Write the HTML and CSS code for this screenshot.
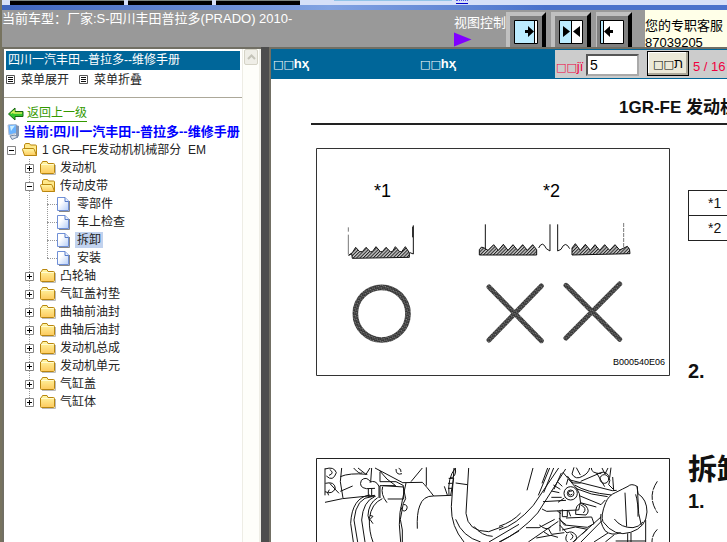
FILE: index.html
```
<!DOCTYPE html>
<html lang="zh-CN">
<head>
<meta charset="utf-8">
<title>维修手册</title>
<link rel="stylesheet" href="styles.css">
</head>
<body>
<svg class="defs" width="0" height="0" aria-hidden="true">
  <defs>
    <linearGradient id="gold" x1="0" y1="0" x2="0" y2="1"><stop offset="0" stop-color="#fff9a8"/><stop offset="1" stop-color="#fdc95c"/></linearGradient>
    <linearGradient id="sheet" x1="0" y1="0" x2="1" y2="1"><stop offset=".35" stop-color="#fff"/><stop offset="1" stop-color="#b4cdf8"/></linearGradient>
    <pattern id="hatch" width="7" height="7" patternUnits="userSpaceOnUse" patternTransform="rotate(45)"><rect width="7" height="7" fill="#ccc"/><path d="M1.500 0V7" stroke="#222" stroke-width="3"/></pattern>
    <pattern id="grain" width="9" height="9" patternUnits="userSpaceOnUse" patternTransform="rotate(25)"><rect width="9" height="9" fill="#303030"/><path d="M1 1h3v3h-3zM5 6h4v2h-4z" fill="#aaa"/></pattern>
    <symbol id="plus" viewBox="0 0 9 9"><path d="M.5 .5h8v8h-8z" fill="#fff" stroke="#848484"/><path d="M2 4.500h5M4.500 2v5" stroke="#000"/></symbol>
    <symbol id="minus" viewBox="0 0 9 9"><path d="M.5 .5h8v8h-8z" fill="#fff" stroke="#848484"/><path d="M2 4.500h5" stroke="#000"/></symbol>
    <symbol id="closed" viewBox="0 0 16 16"><path d="M2 14.500h13.500V5" fill="none" stroke="#bbb"/><path d="M.5 4V12.500q0 1 1 1H13.500q1 0 1-1V4.500q0-1-1-1H8L7 1.500H2.500L1.500 3.500z" fill="url(#gold)" stroke="#b8860f"/><path d="M1 4.500H13.500" stroke="#fffbd0"/></symbol>
    <symbol id="open" viewBox="0 0 16 16"><path d="M2.500 13.500V3L3.500 1.500H7.500L8.500 3H13.500Q14.500 3 14.500 4V13.500z" fill="#ffe98a" stroke="#b8860f"/><path d="M.5 7.500Q.5 6.500 1.500 6.500H11Q12 6.500 12.300 7.500L14.500 13.500H3.500Q2.500 13.500 2.200 12.500z" fill="url(#gold)" stroke="#b8860f"/></symbol>
    <symbol id="page" viewBox="0 0 13 15"><path d="M2 14.500H12.500V4" fill="none" stroke="#888"/><path d="M.5 .5H8L11.500 4V13.500H.5z" fill="url(#sheet)" stroke="#6f8fd6"/><path d="M8 .5V4.500H11.500" fill="#e7f0ff" stroke="#567bc8"/></symbol>
    <symbol id="list" viewBox="0 0 9 9"><path d="M.5 .5h8v8h-8z" fill="#fff" stroke="#555"/><path d="M2 2.500h5M2 4.500h5M2 6.500h5" stroke="#111"/></symbol>
  </defs>
</svg>

<div class="strip" aria-hidden="true"><i class="tab first"></i><i class="tab"></i><i class="tab"></i><i class="strip-line"></i><i class="dots"></i></div>
<header class="header">
  <p class="model">当前车型：厂家:S-四川丰田普拉多(PRADO) 2010-</p>
  <div class="view-label">视图控制
    <svg width="18" height="15" viewBox="0 0 18 15"><path d="M0 .5L17.500 7.500L0 14.500z" fill="#8000ff"/></svg>
  </div>
  <div class="views">
    <button class="view" aria-label="隐藏右侧"><svg width="40" height="36" viewBox="0 0 40 36"><path d="M0 0H40V36H0z" fill="#c0c0c0"/><path d="M4 4H36V36H4z" fill="#808080"/><path d="M36 4L40 0V36H36z" fill="#000"/><path d="M8.500 8.500H31.500V31.500H8.500z" fill="#bcecff" stroke="#000"/><path d="M29 9h2v22H29z" fill="#fff"/><path d="M28.500 9v22" stroke="#000"/><path d="M19 18h3v-4l6 5.500l-6 5.500v-4h-3z"/></svg></button>
    <button class="view" aria-label="并排显示"><svg width="40" height="36" viewBox="0 0 40 36"><path d="M0 0H40V36H0z" fill="#c0c0c0"/><path d="M4 4H36V36H4z" fill="#808080"/><path d="M36 4L40 0V36H36z" fill="#000"/><path d="M8.500 8.500H31.500V31.500H8.500z" fill="#bcecff" stroke="#000"/><path d="M21 9h10v22H21z" fill="#fff"/><path d="M20.500 9v22" stroke="#000"/><path d="M12 14l7 5.500l-7 5.500zM29 14l-7 5.500l7 5.500z"/></svg></button>
    <button class="view" aria-label="隐藏左侧"><svg width="36" height="36" viewBox="0 0 36 36"><path d="M0 0H36V36H0z" fill="#c0c0c0"/><path d="M1 4H32V36H1z" fill="#808080"/><path d="M32 4L36 0V36H32z" fill="#000"/><path d="M4.500 8.500H27.500V31.500H4.500z" fill="#fff" stroke="#000"/><path d="M5 9h2v22H5z" fill="#bcecff"/><path d="M7.500 9v22" stroke="#000"/><path d="M8 19.500l6-5.500v4h3v3h-3v4z"/></svg></button>
  </div>
  <div class="service">您的专职客服<br>87039205</div>
</header>

<main class="frames">
  <nav class="side">
    <div class="side-body">
      <h1 class="manual">四川一汽丰田--普拉多--维修手册</h1>
      <div class="tools">
        <button class="tool"><svg width="9" height="9"><use href="#list"/></svg>菜单展开</button>
        <button class="tool"><svg width="9" height="9"><use href="#list"/></svg>菜单折叠</button>
      </div>
      <a class="back" href="#up"><svg width="16" height="14" viewBox="0 0 16 14"><path d="M.5 7L7 1V4.500H15V9.500H7V13z" fill="#35c52b" stroke="#17650f"/><path d="M3 6.500L6 4V6H14" fill="none" stroke="#d6f05d" stroke-width="1.500"/></svg><span>返回上一级</span></a>
      <div class="current"><svg width="13" height="16" viewBox="0 0 13 16"><path d="M1 1L9 0L10 9L2 11z" fill="#69b2ff" stroke="#b4bfd1"/><path d="M3 2L8 1.500L4 7z" fill="#cdf0ff"/><path d="M9 1L12 2V12L9 14z" fill="#8093b0"/><path d="M3 12L8 11L11 13L5 15.500z" fill="#d5dde9" stroke="#7186a5"/></svg><span>当前:四川一汽丰田--普拉多--维修手册</span></div>
      <ul class="tree root">
        <li><div class="row"><svg class="toggle" width="9" height="9"><use href="#minus"/></svg><svg class="folder" width="16" height="16"><use href="#open"/></svg><a href="#em">1 GR—FE发动机机械部分&nbsp; EM</a></div>
          <ul class="tree">
            <li><div class="row"><svg class="toggle" width="9" height="9"><use href="#plus"/></svg><svg class="folder" width="16" height="16"><use href="#closed"/></svg><a href="#n1">发动机</a></div></li>
            <li><div class="row"><svg class="toggle" width="9" height="9"><use href="#minus"/></svg><svg class="folder" width="16" height="16"><use href="#open"/></svg><a href="#n2">传动皮带</a></div>
              <ul class="tree pages">
                <li class="row"><svg width="13" height="15"><use href="#page"/></svg><a href="#p1">零部件</a></li>
                <li class="row"><svg width="13" height="15"><use href="#page"/></svg><a href="#p2">车上检查</a></li>
                <li class="row"><svg width="13" height="15"><use href="#page"/></svg><a class="selected" href="#p3">拆卸</a></li>
                <li class="row"><svg width="13" height="15"><use href="#page"/></svg><a href="#p4">安装</a></li>
              </ul>
            </li>
            <li><div class="row"><svg class="toggle" width="9" height="9"><use href="#plus"/></svg><svg class="folder" width="16" height="16"><use href="#closed"/></svg><a href="#n3">凸轮轴</a></div></li>
            <li><div class="row"><svg class="toggle" width="9" height="9"><use href="#plus"/></svg><svg class="folder" width="16" height="16"><use href="#closed"/></svg><a href="#n4">气缸盖衬垫</a></div></li>
            <li><div class="row"><svg class="toggle" width="9" height="9"><use href="#plus"/></svg><svg class="folder" width="16" height="16"><use href="#closed"/></svg><a href="#n5">曲轴前油封</a></div></li>
            <li><div class="row"><svg class="toggle" width="9" height="9"><use href="#plus"/></svg><svg class="folder" width="16" height="16"><use href="#closed"/></svg><a href="#n6">曲轴后油封</a></div></li>
            <li><div class="row"><svg class="toggle" width="9" height="9"><use href="#plus"/></svg><svg class="folder" width="16" height="16"><use href="#closed"/></svg><a href="#n7">发动机总成</a></div></li>
            <li><div class="row"><svg class="toggle" width="9" height="9"><use href="#plus"/></svg><svg class="folder" width="16" height="16"><use href="#closed"/></svg><a href="#n8">发动机单元</a></div></li>
            <li><div class="row"><svg class="toggle" width="9" height="9"><use href="#plus"/></svg><svg class="folder" width="16" height="16"><use href="#closed"/></svg><a href="#n9">气缸盖</a></div></li>
            <li><div class="row"><svg class="toggle" width="9" height="9"><use href="#plus"/></svg><svg class="folder" width="16" height="16"><use href="#closed"/></svg><a href="#n10">气缸体</a></div></li>
          </ul>
        </li>
      </ul>
    </div>
    <div class="scroll"><span class="scroll-up"><svg width="9" height="6" viewBox="0 0 9 6"><path d="M1 5L4.500 1.500L8 5" fill="none" stroke="#c4c3b8" stroke-width="2"/></svg></span></div>
  </nav>
  <div class="divider"></div>
  <section class="viewer">
    <div class="bar">
      <a class="step" href="#prev"><span class="box">□□</span>hҳ</a>
      <a class="step" href="#next"><span class="box">□□</span>hҳ</a>
      <form class="jump">
        <label for="pg"><span class="box">□□</span>jї</label>
        <input id="pg" type="text" value="5">
        <button type="button"><span class="box">□□</span>ת</button>
        <output>5 / 16</output>
      </form>
    </div>
    <article class="paper">
      <h2 class="engine">1GR-FE 发动机</h2>
      <div class="columns">
        <div class="figures">
          <svg class="figure" width="354" height="228" viewBox="0 0 354 228">
            <path d="M.5 .5H353.500V227.500H.5z" fill="none" stroke="#333"/>
            <g class="label"><text x="58" y="49">*1</text><text x="227" y="49">*2</text></g>
            <text class="code" x="297" y="217">B000540E06</text>
            <g transform="translate(-17 -8) scale(.33333)" fill="none" stroke="#111" stroke-width="3">
              <path d="M148 262V275M148 284V344" stroke="#777"/><path d="M343 256V342L333 338M341 260V292"/>
              <path d="M149 346L160 338L170 322L182 335H190L201 322L214 335H220L231 320L244 335H250L261 322L274 335H280L289 320L302 335H308L319 320L331 338V352L160 355L158 341z" fill="url(#hatch)"/>
            </g>
            <g transform="translate(143 -8) scale(.33333)" fill="none" stroke="#111" stroke-width="3">
              <path d="M79 253V332M273 253V333L262 326Q250 300 239 324M296 253V333L306 328Q319 300 332 326"/><path d="M494 249V322" stroke="#777" stroke-dasharray="12 3"/>
              <path d="M61 345V329Q67 317 74 323L87 331L104 314L118 331L133 313L147 331L162 314L176 331L191 314L205 331L221 314L233 329V345z" fill="url(#hatch)"/>
              <path d="M339 345V324L349 311L364 331L379 313L394 331L408 314L422 331L437 314L452 331L468 314L482 330L505 319Q514 325 513 341z" fill="url(#hatch)"/>
            </g>
            <g transform="translate(-17 112) scale(.33333)" fill="none" stroke="url(#grain)" stroke-width="17" stroke-linecap="round">
              <circle cx="248" cy="161" r="79"/><path stroke-width="15" d="M570 81L727 242M727 78L570 240M801 76L962 238M962 72L801 234"/>
            </g>
          </svg>
          <svg class="figure" width="354" height="228" viewBox="0 0 354 228">
            <path d="M.5 .5H353.500V227.500H.5z" fill="none" stroke="#222"/>
            <g transform="translate(-17 -18) scale(.33333)" fill="none" stroke="#111" stroke-width="3">
              <path d="M78 85V166M78 187L130 176L228 166M128 84L124 125L132 174M124 110Q150 98 205 103M78 87Q105 78 112 98Q102 127 82 108M92 88Q108 100 90 106M79 130Q107 123 109 145Q100 165 78 155M92 130L120 160M91 149Q82 160 89 166M124 154L161 138M164 84Q182 105 190 98M177 84L201 103L213 84"/>
              <path d="M218 84L215 126Q202 107 187 121Q178 142 202 146L228 145M228 84L311 128M212 127Q230 118 240 139M243 96V125H291L314 137M240 90Q263 121 290 137H243V174M291 87Q291 107 309 101M299 85Q307 86 306 96M370 84L336 125M382 82V137M310 128L370 127Q382 139 404 168L458 166M404 168Q372 167 362 198Q353 220 355 266"/>
              <path d="M208 146V169H230M218 146V167M240 138V174M251 140Q244 163 264 188M252 137L314 141V177H266M321 129L311 176Q300 220 301 254L305 306M312 137L320 176L313 190L304 238L310 270V306M313 193Q330 195 322 210Q311 219 306 202"/>
              <path d="M213 165Q159 172 155 250L163 306M219 170Q172 171 165 240L176 306M227 170Q192 184 188 240L198 306M236 173Q208 190 207 227L212 243M250 176Q217 190 211 236Q210 276 222 306M213 226L222 229L213 238L222 251"/>
              <path d="M469 84Q445 114 450 165M469 84Q474 111 451 116M449 115H464L455 166M436 139L445 165M447 130H461M447 145H460M465 84L457 200Q456 260 495 306M509 84L501 220Q506 275 569 275L613 259M470 129L505 134M470 238Q490 290 545 306M525 259Q548 288 581 289M570 306L660 253M603 306L660 273"/>
            </g>
            <g transform="translate(183 -18) scale(.33333)" fill="none" stroke="#111" stroke-width="3">
              <path d="M102 84L84 151M152 84L118 166M146 84L129 130M164 84L134 158M179 84L103 196Q52 255 0 270M200 87L116 219Q65 277 0 306M187 99L165 148M0 259Q40 246 65 219M205 108L222 129H245M191 96L233 146M225 82L219 102Q230 121 250 109Q268 101 272 84M232 83L244 105M277 84Q276 100 307 101"/>
              <path d="M209 119L340 152L353 151M245 124L294 103Q317 88 329 107Q336 123 329 134L342 147M293 99L317 140M309 84L318 102M327 84L318 102M336 83L332 113M232 146Q276 166 326 170M227 135Q260 157 337 165M341 111L344 151"/>
              <circle cx="316" cy="117" r="13"/><circle cx="215" cy="160" r="20"/><circle cx="215" cy="160" r="10"/><path d="M218 154Q207 151 209 163Q215 168 220 162M175 125L190 139M163 135L184 148M157 153L181 158M157 172H188M177 187L196 174M202 134L207 117M232 143L241 161Q249 188 239 210L143 214L129 207M132 185L201 181M241 167L306 194L319 180M244 188L292 201"/>
              <path d="M183 210V274M190 208V230H205V211M175 213L186 221M209 213L215 229M230 223Q228 194 247 190L261 198Q274 214 261 225L230 223M246 195Q266 205 253 219M201 234L278 231L285 251L265 262L196 255L180 234M184 241L201 254M306 231L225 303M309 242L246 306M121 255Q144 274 155 261M81 263H120L167 238M88 306L178 244M112 294L156 286L177 292M149 267L158 283L196 278M182 255L204 279M189 270L229 261L265 268L250 282M135 276L152 287"/>
              <path d="M204 279Q219 270 231 286Q237 301 221 306M204 283Q196 299 206 306M215 281Q229 288 214 300M349 158Q373 146 387 139Q397 129 414 139L417 161Q444 178 444 216Q442 262 395 277Q347 293 312 245Q304 228 320 188Q329 166 349 158M415 139L419 220L427 256M378 158L383 260M410 163Q418 188 417 230M306 222Q301 246 318 272Q337 289 365 278M346 237Q366 264 402 263Q418 262 432 246M440 240V306M386 280V306M396 278V306M350 303H440M327 279L285 306M346 284L319 306"/>
              <path d="M475 124Q443 171 476 219M475 268Q459 283 459 306" stroke-dasharray="28 3"/>
            </g>
          </svg>
        </div>
        <div class="notes">
          <table class="key"><tr><td>*1</td></tr><tr><td>*2</td></tr></table>
          <p class="num second">2.</p>
          <h3>拆卸</h3>
          <p class="num">1.</p>
        </div>
      </div>
    </article>
  </section>
</main>
</body>
</html>
```
FILE: styles.css
```
* { box-sizing: border-box; }
body {
  margin: 0;
  height: 100vh;
  display: flex;
  flex-direction: column;
  overflow: hidden;
  background: #999;
  border-left: 2px solid #77735f;
  font: 12px/18px "Liberation Sans", "Noto Sans CJK SC", sans-serif;
  color: #222;
}
.defs { position: absolute; }
svg { display: block; flex: none; }
h1, h2, h3, p, ul { margin: 0; padding: 0; }
button { font: inherit; color: inherit; padding: 0; border: 0; background: none; }
a { color: inherit; text-decoration: none; }

.strip {
  display: flex;
  flex: none;
  gap: 4px;
  height: 10px;
  padding-left: 8px;
  background: linear-gradient(#d6e0f8 0 5px, transparent 5px), linear-gradient(90deg, #3e65bd, #82a3e2 45%, #4a72cb 75%);
}
.tab { width: 84px; height: 5px; background: #000; border-top: 1px solid #7c8580; }
.tab.first { width: 114px; }
.strip-line { width: 118px; height: 1px; margin-left: 30px; background: #91c4e8; }
.dots { width: 12px; height: 4px; border: solid #00c; border-width: 1px 0; border-top: 1px dotted #55e; }

.header { display: flex; flex: none; height: 37px; overflow: hidden; color: #fff; }
.model { flex: 1; font-size: 13px; line-height: 18px; white-space: nowrap; }
.view-label { width: 52px; padding-top: 4px; font-size: 13px; white-space: nowrap; }
.views { display: flex; gap: 5px; padding-top: 2px; }
.service {
  width: 82px;
  margin-left: 13px;
  padding-top: 7px;
  background: #ffffe8;
  color: #000;
  font-size: 13px;
  line-height: 17px;
  white-space: nowrap;
}

.frames { display: flex; flex: 1; min-height: 0; }
.side, .viewer { border: solid #716f64; border-width: 2px 0 0 2px; background: #fff; }
.side { display: flex; flex: none; width: 259px; }
.side-body { flex: 1; min-width: 0; overflow: hidden; }
.manual {
  margin: 2px 2px 0;
  padding-left: 2px;
  background: #069;
  color: #fff;
  font-size: 12px;
  font-weight: 400;
  line-height: 19px;
}
.tools {
  display: flex;
  gap: 10px;
  height: 28px;
  padding: 0 2px 8px;
  border-bottom: 1px solid #aca899;
}
.tool { display: flex; align-items: center; gap: 6px; }
.back { display: flex; align-items: center; gap: 3px; margin: 8px 0 0 4px; color: #390; }
.back span { line-height: 15px; border-bottom: 1px solid #390; }
.current {
  display: flex;
  align-items: center;
  gap: 3px;
  height: 19px;
  padding-left: 3px;
  white-space: nowrap;
  font-weight: 700;
  font-size: 13px;
  color: #00f;
}
.tree {
  list-style: none;
  margin-left: 25px;
  background: repeating-linear-gradient(#999 0 1px, transparent 1px 2px) no-repeat 0 0 / 1px calc(100% - 9px);
}
.root { margin-left: 7px; background: none; }
.tree .tree { margin-left: 18px; }
.row { display: flex; align-items: center; height: 18px; white-space: nowrap; }
.toggle { margin-left: -4px; }
.folder { margin-right: 4px; }
.toggle::after { content: none; }
.row .folder { margin-left: 6px; }
.pages .row::before { content: ""; width: 10px; border-top: 1px dotted #999; }
.pages a { margin-left: 5px; padding: 0 2px; line-height: 16px; }
.selected { background: #c1d2ee; }
.scroll { width: 19px; padding: 0 1px; border-left: 1px solid #eeede5; border-right: 2px solid #eeede5; background: #fefefa; }
.scroll-up {
  display: grid;
  place-items: center;
  height: 16px;
  border: 1px solid #d5d3c6;
  border-radius: 2px;
  background: #efeee7;
}
.divider { flex: none; width: 8px; background: #4d4d4d; }

.viewer { flex: 1; min-width: 0; overflow: hidden; }
.bar { display: flex; height: 30px; padding: 1px 0; background: #069; color: #fff; }
.step { width: 147px; padding: 5px 0 0 2px; font: bold 13px/18px "Liberation Sans", "Open Sans", "DejaVu Sans", sans-serif; }
.step + .step { width: 137px; }
.box { font: 11px/16px "DejaVu Sans", sans-serif; }
.jump { display: flex; flex: 1; gap: 4px; padding-left: 1px; background: #ccc; color: #f00040; font-size: 13px; white-space: nowrap; }
.jump label { width: 26px; padding-top: 8px; }
.jump input {
  width: 53px;
  height: 22px;
  margin: 4px 4px 0 0;
  padding: 0 2px;
  border: 2px inset #aaa;
  font: 14px "Liberation Sans", sans-serif;
}
.jump button { width: 42px; height: 25px; margin-top: 1px; border: 1px solid #000; background: #ece9d8; box-shadow: inset -2px -2px #aca899, inset 1px 1px #fff; color: #000; }
.jump output { padding-top: 8px; }

.paper { padding: 19px 0 0 40px; color: #111; }
.engine {
  height: 27px;
  padding-left: 308px;
  border-bottom: 2px solid #222;
  font-size: 17px;
  line-height: 20px;
  white-space: nowrap;
}
.columns { display: flex; gap: 18px; padding: 23px 0 0 5px; }
.figures { display: grid; flex: none; gap: 82px; }
.label { font: 18px "Liberation Sans", sans-serif; }
.code { font: 9px "Liberation Sans", sans-serif; }
.notes { flex: 1; min-width: 0; padding-top: 42px; }
.key { width: 90px; border-collapse: collapse; font-size: 14px; line-height: 22px; }
.key td { padding: 1px 0 1px 19px; border: 1px solid #222; }
.num { font-size: 20px; line-height: 24px; font-weight: 700; }
.second { margin-top: 118px; }
.notes h3 { margin-top: 68px; font-size: 29px; line-height: 38px; white-space: nowrap; }
```
